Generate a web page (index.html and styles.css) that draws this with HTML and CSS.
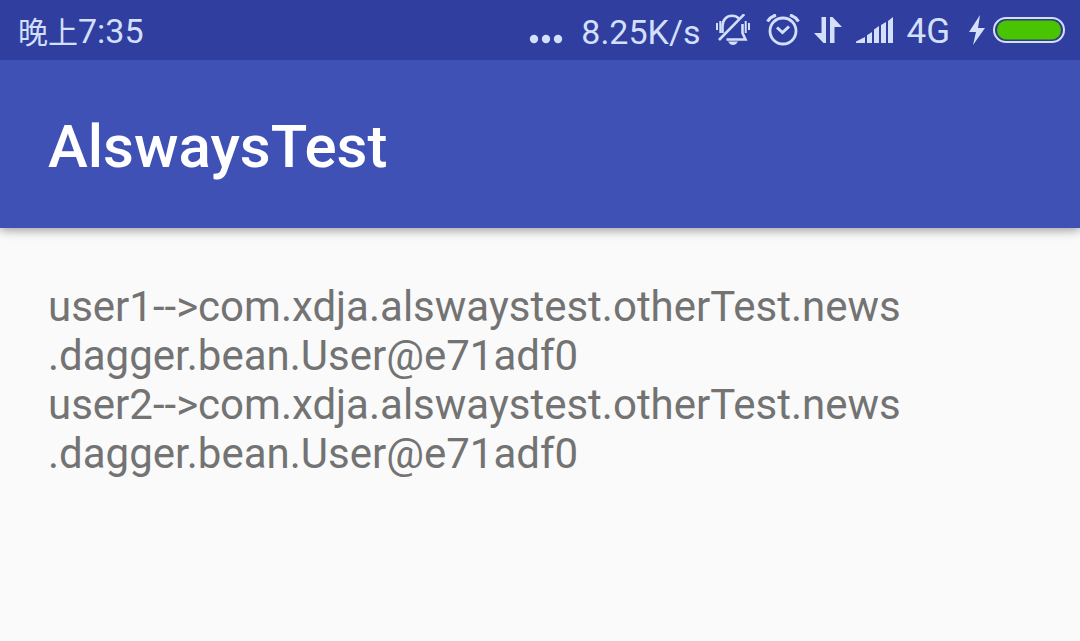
FILE: index.html
```html
<!DOCTYPE html>
<html lang="zh">
<head>
<meta charset="utf-8">
<meta name="viewport" content="width=device-width, initial-scale=1">
<title>AlswaysTest</title>
<link rel="stylesheet" href="styles.css">
</head>
<body>
<div class="status-bar">
  <time class="clock"><span class="period">晚上</span>7:35</time>
  <div class="indicators">
    <svg class="icon-dots" width="34" height="32" viewBox="0 0 34 32" aria-hidden="true"><circle cx="5" cy="25" r="4.2"/><circle cx="17" cy="25" r="4.2"/><circle cx="29" cy="25" r="4.2"/></svg>
    <span class="speed">8.25K/s</span>
    <svg class="icon-bell" width="34" height="32" viewBox="0 0 34 32" aria-hidden="true">
      <g fill="none" stroke="currentColor" stroke-width="2.6"><path d="M6.500 19V12C6.500 6 10.500 1.700 16 1.700c3 0 5.200 1 6.800 2.800M26.500 10V19L29.500 25.500H10.500M3 26L28.300.2"/><path stroke-width="2" d="M1 9v7M4.300 7v12M29.700 7v12M33 9v7"/></g>
      <path d="M12 27.500h10c-1.500 2.400-3 3.500-5 3.500s-3.500-1.100-5-3.500z"/>
    </svg>
    <svg class="icon-alarm" width="34" height="32" viewBox="0 0 34 32" aria-hidden="true">
      <g fill="none" stroke="currentColor"><circle cx="17" cy="17" r="13" stroke-width="2.800"/><path stroke-width="3" d="M11 13.500L16.500 18.500L23 12.500"/><path stroke-width="3.200" d="M1.500 7.500Q4.500 2.800 10 1M24 1Q29.500 2.800 32.500 7.500"/></g>
    </svg>
    <svg class="icon-data" width="28" height="32" viewBox="0 0 28 32" aria-hidden="true"><path d="M7.500 3H12V29H9.500L0 19H7.500zM16 3H18.500L28 13H20.500V29H16z"/></svg>
    <svg class="icon-signal" width="38" height="32" viewBox="0 0 38 32" aria-hidden="true"><path d="M0 29v-1.500L9 23v6zM11 21.300L16 18v11h-5zM18 15.500L23 12v17h-5zM25 11L30 8v21h-5zM32 7L37 3v26h-5z"/></svg>
    <span class="network">4G</span>
    <svg class="icon-bolt" width="18" height="32" viewBox="0 0 18 32" aria-hidden="true"><path d="M12 1L1 18H8L5 31L17 14H10z"/></svg>
    <svg class="icon-battery" width="72" height="28" viewBox="0 0 72 28" aria-hidden="true"><rect class="battery-shell" x="1" y="2" width="70" height="24" rx="12"/><rect class="battery-level" x="4" y="4.500" width="64" height="19" rx="9.500"/></svg>
  </div>
</div>
<header class="app-bar"><h1 class="title">AlswaysTest</h1></header>
<main class="content">
  <p class="output">user1--&gt;com.xdja.alswaystest.otherTest.news<br>.dagger.bean.User@e71adf0<br>user2--&gt;com.xdja.alswaystest.otherTest.news<br>.dagger.bean.User@e71adf0</p>
</main>
</body>
</html>
```
FILE: styles.css
```css
* {
  box-sizing: border-box;
}

body {
  margin: 0;
  min-height: 100vh;
  background: #fafafa;
  color: #737373;
  font-family: Roboto, "Noto Sans CJK SC", sans-serif;
}

.status-bar {
  position: relative;
  z-index: 1;
  display: flex;
  align-items: center;
  justify-content: space-between;
  height: 60px;
  padding: 0 15px 0 18px;
  background: #303f9f;
  color: #d3dffb;
  font-size: 34px;
  line-height: 40px;
  white-space: nowrap;
}

.clock {
  padding-top: 4px;
}

.period {
  font-size: 30px;
}

.indicators {
  display: flex;
  align-items: center;
}

.indicators svg {
  flex: none;
  fill: currentColor;
}

.speed,
.network {
  padding-top: 4px;
}

.speed {
  margin: 0 16px 0 18px;
}

.network {
  font-size: 35px;
}

.icon-alarm {
  margin: 0 14px 0 16px;
}

.icon-signal {
  margin: 0 12px 0 14px;
}

.icon-bolt {
  margin: 0 7px 0 18px;
}

.indicators .battery-shell {
  fill: #303f85;
  stroke: #d3dffb;
  stroke-width: 2;
}

.indicators .battery-level {
  fill: #48c400;
}

.app-bar {
  display: flex;
  align-items: center;
  height: 168px;
  padding: 6px 48px 0;
  background: #3f51b5;
  box-shadow: 0 2px 10px rgba(0, 0, 0, 0.4);
}

.title {
  margin: 0;
  color: #ffffff;
  font-size: 60px;
  font-weight: 500;
  line-height: 72px;
}

.content {
  padding: 54px 48px;
}

.output {
  margin: 0;
  font-size: 42px;
  line-height: 49px;
}
```
